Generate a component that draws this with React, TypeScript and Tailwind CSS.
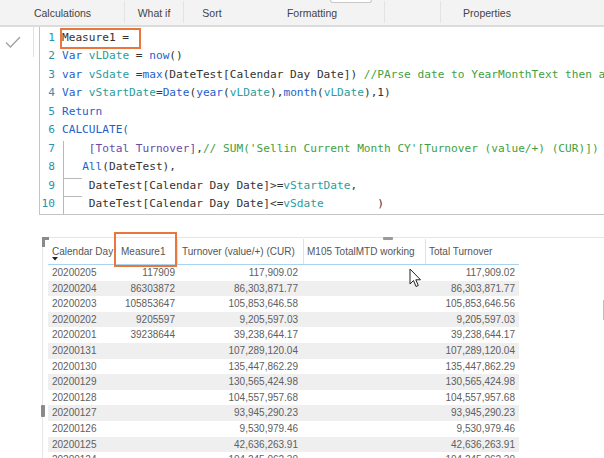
import React from "react";

const C = {
  kw: "#1f5fc8",
  v: "#2a9d9d",
  t: "#333333",
  cm: "#3f9f3f",
  ms: "#6b4aa5",
};

type Seg = [string, string];

const lines: Seg[][] = [
  [["Measure1 =", C.t]],
  [["Var", C.kw], [" ", C.t], ["vLDate", C.v], [" = ", C.t], ["now", C.kw], ["()", C.t]],
  [
    ["var", C.kw], [" ", C.t], ["vSdate", C.v], [" =", C.t], ["max", C.kw],
    ["(DateTest[Calendar Day Date]) ", C.t], ["//PArse date to YearMonthText then a", C.cm],
  ],
  [
    ["Var", C.kw], [" ", C.t], ["vStartDate", C.v], ["=", C.t], ["Date", C.kw], ["(", C.t],
    ["year", C.kw], ["(", C.t], ["vLDate", C.v], ["),", C.t], ["month", C.kw], ["(", C.t],
    ["vLDate", C.v], ["),1)", C.t],
  ],
  [["Return", C.kw]],
  [["CALCULATE(", C.kw]],
  [["    ", C.t], ["[Total Turnover]", C.ms], [",", C.t], ["// SUM('Sellin Current Month CY'[Turnover (value/+) (CUR)])", C.cm]],
  [["   ", C.t], ["All", C.kw], ["(DateTest),", C.t]],
  [["    ", C.t], ["DateTest[Calendar Day Date]>=", C.t], ["vStartDate", C.v], [",", C.t]],
  [["    ", C.t], ["DateTest[Calendar Day Date]<=", C.t], ["vSdate", C.v], ["        )", C.t]],
];

const rows: string[][] = [
  ["20200205", "117909", "117,909.02", "117,909.02"],
  ["20200204", "86303872", "86,303,871.77", "86,303,871.77"],
  ["20200203", "105853647", "105,853,646.58", "105,853,646.56"],
  ["20200202", "9205597", "9,205,597.03", "9,205,597.03"],
  ["20200201", "39238644", "39,238,644.17", "39,238,644.17"],
  ["20200131", "", "107,289,120.04", "107,289,120.04"],
  ["20200130", "", "135,447,862.29", "135,447,862.29"],
  ["20200129", "", "130,565,424.98", "130,565,424.98"],
  ["20200128", "", "104,557,957.68", "104,557,957.68"],
  ["20200127", "", "93,945,290.23", "93,945,290.23"],
  ["20200126", "", "9,530,979.46", "9,530,979.46"],
  ["20200125", "", "42,636,263.91", "42,636,263.91"],
  ["20200124", "", "104,245,062.30", "104,245,062.30"],
];

export default function App() {
  return (
    <div className="w-[604px] h-[458px] overflow-hidden bg-white relative font-['Liberation_Sans',sans-serif]">
      {/* Ribbon */}
      <div className="h-[27px] bg-[#f3f3f3] border-b-2 border-[#dcdcdc] relative flex items-end pb-[2px] text-[10.5px] text-[#444]">
        <div className="absolute left-[330px] top-0 w-[42px] h-[3px] border border-t-0 border-[#c8c8c8] rounded-b-[3px] bg-white" />
        <div className="w-[125px] text-center border-r border-[#e4e4e4] h-[22px] flex items-end justify-center pb-[1px] pl-[1px]">Calculations</div>
        <div className="w-[59px] text-center border-r border-[#e4e4e4] h-[22px] flex items-end justify-center pb-[1px]">What if</div>
        <div className="w-[56px] text-center h-[22px] flex items-end justify-center pb-[1px]">Sort</div>
        <div className="w-[145px] text-center border-r border-[#e4e4e4] h-[22px] flex items-end justify-center pb-[1px]">Formatting</div>
        <div className="w-[56px] border-r border-[#e4e4e4] h-[22px]" />
        <div className="w-[90px] text-center h-[22px] flex items-end justify-center pl-[2px] pb-[1px]">Properties</div>
      </div>

      {/* Formula bar */}
      <div className="flex">
        <div className="w-[39px] shrink-0">
          <div className="w-[34px] h-[30px] border-r border-[#e0e0e0] flex items-center justify-center">
            <svg width="16" height="12" viewBox="0 0 16 12" className="-mt-[1px] -ml-[8px]">
              <path d="M1 6.5 L5.5 11 L15 1" fill="none" stroke="#a0a0a0" strokeWidth="1.3" />
            </svg>
          </div>
        </div>
        <div className="flex-1 h-[188px] border-l border-b border-[#c4c4c4] flex pt-[2px] relative overflow-hidden">
          <div className="w-[15px] shrink-0 font-['DejaVu_Sans_Mono',monospace] text-[11.15px] leading-[18.45px] text-[#2b91af] text-right">
            {lines.map((_, i) => (
              <div key={i}>{i + 1}</div>
            ))}
          </div>
          <div className="pl-[7px] font-['DejaVu_Sans_Mono',monospace] text-[11.15px] leading-[18.45px] whitespace-pre relative">
            {/* indent guides */}
            <div className="absolute left-[8px] top-[112px] w-px h-[76px] bg-[#b8b8b8]" />
            <div className="absolute left-[8px] top-[149px] w-[19px] h-px bg-[#b8b8b8]" />
            <div className="absolute left-[8px] top-[167px] w-[19px] h-px bg-[#b8b8b8]" />
            {lines.map((segs, i) => (
              <div key={i} className="relative">
                {segs.map(([s, c], j) => (
                  <span key={j} style={{ color: c }}>{s}</span>
                ))}
                {i === 0 && (
                  <div className="absolute -left-[2px] top-[-1px] w-[81px] h-[21px] border-2 border-[#e8763d]" />
                )}
              </div>
            ))}
          </div>
        </div>
      </div>

      {/* Table visual */}
      <div className="mt-[22px] ml-[42px] border-t border-l border-[#e6e6e6] h-[300px] relative">
        {/* corner handle */}
        <div className="absolute -left-px -top-px w-[7px] h-[3px] bg-[#8a8a8a]" />
        <div className="absolute -left-px -top-px w-[3px] h-[10px] bg-[#8a8a8a]" />
        {/* top center handle */}
        <div className="absolute left-[340px] -top-[1px] w-[10px] h-[3px] rounded-[1px] bg-[#9a9a9a]" />
        {/* left side handle */}
        <div className="absolute -left-[2px] top-[167px] w-[4px] h-[12px] rounded-[1px] bg-[#8a8a8a]" />

        <div className="ml-[5px] mt-[1px] w-[471px] text-[10px] text-[#606060]">
          {/* header */}
          <div className="flex h-[26px] border-b border-[#a9d3ef] text-[#555]">
            <div className="w-[67px] pl-[4px] pt-[5px] relative whitespace-nowrap overflow-hidden">
              Calendar Day
              <svg width="6" height="4" viewBox="0 0 6 4" className="absolute left-[4px] top-[18px]">
                <path d="M0 0 L6 0 L3 3.5 Z" fill="#222" />
              </svg>
            </div>
            <div className="w-[62px] pl-[5px] pt-[5px] border-l border-[#e2e2e2] relative">
              Measure1
              <div className="absolute -left-[2px] -top-[7px] w-[63px] h-[35px] border-2 border-[#e8763d]" />
            </div>
            <div className="w-[126px] pl-[4px] pt-[5px] border-l border-[#e2e2e2] whitespace-nowrap">Turnover (value/+) (CUR)</div>
            <div className="w-[122px] pl-[3px] pt-[5px] border-l border-[#e2e2e2] whitespace-nowrap">M105 TotalMTD working</div>
            <div className="w-[94px] pl-[3px] pt-[5px] border-l border-[#e2e2e2] whitespace-nowrap">Total Turnover</div>
          </div>
          {rows.map((r, i) => (
            <div key={i} className={`flex h-[15.6px] leading-[15.6px] ${i % 2 === 1 ? "bg-[#efefef]" : ""}`}>
              <div className="w-[67px] pl-[4px]">{r[0]}</div>
              <div className="w-[62px] text-right pr-[2px]">{r[1]}</div>
              <div className="w-[126px] text-right pr-[5px]">{r[2]}</div>
              <div className="w-[122px]" />
              <div className="w-[94px] text-right pr-[4px]">{r[3]}</div>
            </div>
          ))}
        </div>
      </div>

      {/* right edge marker */}
      <div className="absolute right-0 top-[300px] w-px h-[20px] bg-[#bdbdbd]" />

      {/* mouse cursor */}
      <svg width="13" height="20" viewBox="0 0 13 20" className="absolute left-[409px] top-[268px]">
        <path d="M1 1 L1 16 L4.5 12.5 L7 18.5 L9.3 17.5 L6.8 11.8 L11.5 11.8 Z" fill="#fff" stroke="#222" strokeWidth="1" strokeLinejoin="round" />
      </svg>
    </div>
  );
}
